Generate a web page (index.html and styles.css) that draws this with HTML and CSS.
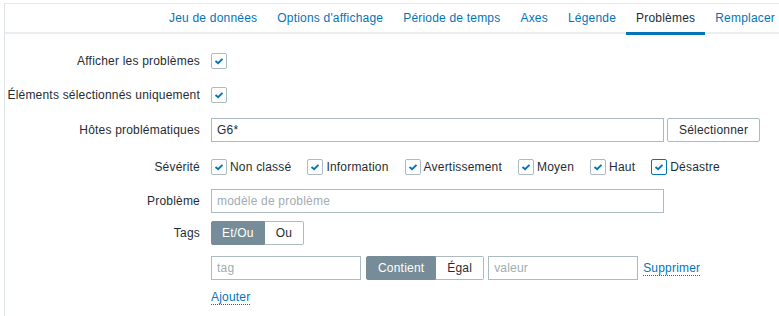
FILE: index.html
```html
<!DOCTYPE html>
<html lang="fr">
<head>
  <meta charset="UTF-8">
  <title>Problèmes</title>
  <link rel="stylesheet" href="styles.css">
</head>
<body>
  <div class="frame">
    <ul class="tabs">
      <li><a href="#">Jeu de données</a></li>
      <li><a href="#">Options d'affichage</a></li>
      <li><a href="#">Période de temps</a></li>
      <li><a href="#">Axes</a></li>
      <li><a href="#">Légende</a></li>
      <li><a href="#" class="active">Problèmes</a></li>
      <li><a href="#">Remplacer</a></li>
    </ul>

    <div class="form-list">
      <div class="row">
        <label class="row-label">Afficher les problèmes</label>
        <div class="row-field">
          <span class="check"><svg viewBox="0 0 16 16"><polyline points="4,8 7,10.5 12,5.5"/></svg></span>
        </div>
      </div>

      <div class="row">
        <label class="row-label">Éléments sélectionnés uniquement</label>
        <div class="row-field">
          <span class="check"><svg viewBox="0 0 16 16"><polyline points="4,8 7,10.5 12,5.5"/></svg></span>
        </div>
      </div>

      <div class="row row-hosts">
        <label class="row-label">Hôtes problématiques</label>
        <div class="row-field">
          <input type="text" class="text-wide" value="G6*">
          <button class="btn-alt">Sélectionner</button>
        </div>
      </div>

      <div class="row row-severity">
        <label class="row-label">Sévérité</label>
        <div class="row-field severity-list">
          <span class="check-item"><span class="check"><svg viewBox="0 0 16 16"><polyline points="4,8 7,10.5 12,5.5"/></svg></span>Non classé</span>
          <span class="check-item"><span class="check"><svg viewBox="0 0 16 16"><polyline points="4,8 7,10.5 12,5.5"/></svg></span>Information</span>
          <span class="check-item"><span class="check"><svg viewBox="0 0 16 16"><polyline points="4,8 7,10.5 12,5.5"/></svg></span>Avertissement</span>
          <span class="check-item"><span class="check"><svg viewBox="0 0 16 16"><polyline points="4,8 7,10.5 12,5.5"/></svg></span>Moyen</span>
          <span class="check-item"><span class="check"><svg viewBox="0 0 16 16"><polyline points="4,8 7,10.5 12,5.5"/></svg></span>Haut</span>
          <span class="check-item"><span class="check focused"><svg viewBox="0 0 16 16"><polyline points="4,8 7,10.5 12,5.5"/></svg></span>Désastre</span>
        </div>
      </div>

      <div class="row">
        <label class="row-label">Problème</label>
        <div class="row-field">
          <input type="text" class="text-wide" placeholder="modèle de problème">
        </div>
      </div>

      <div class="row row-tags">
        <label class="row-label">Tags</label>
        <div class="row-field">
          <div class="segmented">
            <span class="seg selected">Et/Ou</span>
            <span class="seg">Ou</span>
          </div>
        </div>
      </div>

      <div class="row row-tag">
        <span class="row-label"></span>
        <div class="row-field tag-row">
          <input type="text" class="text-tag" placeholder="tag">
          <div class="segmented">
            <span class="seg selected">Contient</span>
            <span class="seg">Égal</span>
          </div>
          <input type="text" class="text-tag" placeholder="valeur">
          <a href="#" class="link-action">Supprimer</a>
        </div>
      </div>

      <div class="row row-add">
        <span class="row-label"></span>
        <div class="row-field">
          <a href="#" class="link-action">Ajouter</a>
        </div>
      </div>
    </div>
  </div>
</body>
</html>
```

FILE: styles.css
```css
body {
  margin: 0;
  padding: 0;
  background: #fff;
  font-family: Arial, "Liberation Sans", sans-serif;
  font-size: 12px;
  letter-spacing: 0.2px;
  color: #1f2c33;
  overflow: hidden;
}

.frame {
  margin: 3px 0 0 4px;
  border-top: 1px solid #e4e8ea;
  border-left: 1px solid #dfe4e7;
  height: 320px;
  overflow: hidden;
}

.tabs {
  list-style: none;
  margin: 0;
  padding: 0 0 0 154px;
  display: flex;
  white-space: nowrap;
  border-bottom: 2px solid #ebeef0;
  height: 28px;
}

.tabs a {
  display: block;
  padding: 0 10px;
  line-height: 28px;
  color: #0275b8;
  text-decoration: none;
  border-bottom: 3px solid transparent;
}

.tabs a.active {
  color: #1f2c33;
  border-bottom-color: #0275b8;
}

.form-list {
  padding-top: 15px;
  display: flex;
  flex-direction: column;
  gap: 10px;
}

.row {
  display: grid;
  grid-template-columns: 195px 1fr;
  column-gap: 11px;
  align-items: center;
  min-height: 24px;
}

.row-label {
  text-align: right;
  white-space: nowrap;
}

.row-field {
  display: flex;
  align-items: center;
}

.row-hosts {
  margin-top: 1px;
}

.row-severity {
  margin-top: 3px;
}

.row-tags {
  margin-top: -2px;
}

.row-tag {
  margin-top: 1px;
}

.row-add {
  margin-top: -2px;
  min-height: 18px;
}

.check {
  box-sizing: border-box;
  width: 16px;
  height: 16px;
  border: 1px solid #acbbc2;
  border-radius: 2px;
  background: #fff;
  display: inline-flex;
}

.check.focused {
  border-color: #0275b8;
}

.check svg {
  width: 14px;
  height: 14px;
}

.check polyline {
  fill: none;
  stroke: #0275b8;
  stroke-width: 2.2;
}

.severity-list {
  gap: 16px;
}

.check-item {
  display: inline-flex;
  align-items: center;
  gap: 3px;
}

input[type="text"] {
  box-sizing: border-box;
  height: 24px;
  border: 1px solid #acbbc2;
  border-radius: 0;
  padding: 0 5px;
  font-family: Arial, "Liberation Sans", sans-serif;
  font-size: 12px;
  letter-spacing: 0.2px;
  color: #1f2c33;
  margin: 0;
  outline: none;
}

input::placeholder {
  color: #a2acb1;
}

.text-wide {
  width: 453px;
}

.text-tag {
  width: 150px;
}

.btn-alt {
  box-sizing: border-box;
  height: 24px;
  margin-left: 3px;
  padding: 0 11px;
  border: 1px solid #acbbc2;
  border-radius: 2px;
  background: #fff;
  color: #1f2c33;
  font-family: Arial, "Liberation Sans", sans-serif;
  font-size: 12px;
  letter-spacing: 0.2px;
}

.segmented {
  display: flex;
  height: 24px;
  box-sizing: border-box;
}

.seg {
  padding: 0 11px;
  line-height: 22px;
  border: 1px solid #acbbc2;
  background: #fff;
  color: #1f2c33;
}

.seg:first-child {
  border-radius: 2px 0 0 2px;
}

.seg:last-child {
  border-left: none;
  border-radius: 0 2px 2px 0;
}

.seg.selected {
  background: #768d99;
  border-color: #768d99;
  color: #fff;
}

.row-tags .seg.selected {
  padding: 0 10px;
}

.tag-row .segmented {
  margin: 0 4px 0 5px;
}

.link-action {
  color: #0275b8;
  text-decoration: none;
  border-bottom: 1px dotted #0275b8;
  line-height: 14px;
}

.tag-row .link-action {
  margin-left: 5px;
}
```
